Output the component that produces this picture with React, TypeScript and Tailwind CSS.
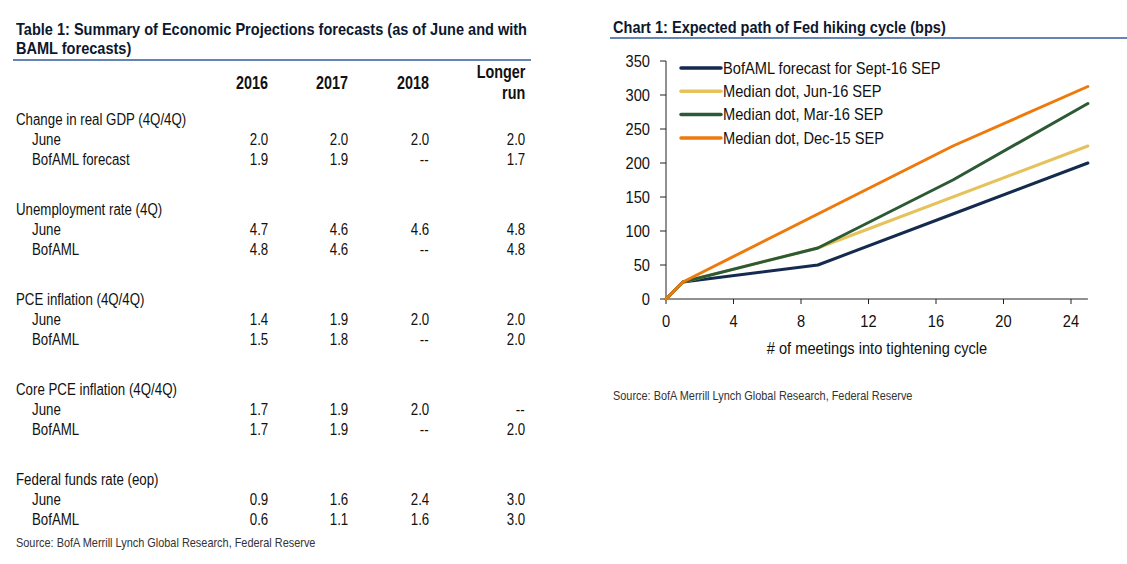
const arial = { fontFamily: '"Liberation Sans", Arial, sans-serif' };

type Row = { label: string; values: string[] };
type Group = { title: string; rows: Row[] };

const groups: Group[] = [
  { title: "Change in real GDP (4Q/4Q)", rows: [
    { label: "June", values: ["2.0", "2.0", "2.0", "2.0"] },
    { label: "BofAML forecast", values: ["1.9", "1.9", "--", "1.7"] },
  ] },
  { title: "Unemployment rate (4Q)", rows: [
    { label: "June", values: ["4.7", "4.6", "4.6", "4.8"] },
    { label: "BofAML", values: ["4.8", "4.6", "--", "4.8"] },
  ] },
  { title: "PCE inflation (4Q/4Q)", rows: [
    { label: "June", values: ["1.4", "1.9", "2.0", "2.0"] },
    { label: "BofAML", values: ["1.5", "1.8", "--", "2.0"] },
  ] },
  { title: "Core PCE inflation (4Q/4Q)", rows: [
    { label: "June", values: ["1.7", "1.9", "2.0", "--"] },
    { label: "BofAML", values: ["1.7", "1.9", "--", "2.0"] },
  ] },
  { title: "Federal funds rate (eop)", rows: [
    { label: "June", values: ["0.9", "1.6", "2.4", "3.0"] },
    { label: "BofAML", values: ["0.6", "1.1", "1.6", "3.0"] },
  ] },
];

// chart scale (svg origin at page x=610, y=40)
const X = (m: number) => 56 + m * 16.875;
const Y = (b: number) => 260 - b * 0.68;

const series = [
  { name: "BofAML forecast for Sept-16 SEP", color: "#142a4f", pts: [[0, 0], [1, 25], [9, 50], [17, 125], [25, 200]] },
  { name: "Median dot, Jun-16 SEP", color: "#e6c25c", pts: [[0, 0], [1, 25], [9, 75], [25, 225]] },
  { name: "Median dot, Mar-16 SEP", color: "#2b5a34", pts: [[0, 0], [1, 25], [9, 75], [17, 175], [25, 287.5]] },
  { name: "Median dot, Dec-15 SEP", color: "#ee7a0c", pts: [[0, 0], [1, 25], [17, 225], [25, 312.5]] },
];

// svg label, slightly condensed
function Label({ x, y, anchor = "start", children }: { x: number; y: number; anchor?: "start" | "middle" | "end"; children: React.ReactNode }) {
  return (
    <text transform={`translate(${x} ${y}) scale(0.915 1)`} textAnchor={anchor} fontSize="16" fill="#111">
      {children}
    </text>
  );
}

function Chart() {
  const yTicks = [0, 50, 100, 150, 200, 250, 300, 350];
  const xTicks = [0, 4, 8, 12, 16, 20, 24];
  return (
    <svg width="517" height="330" className="block" style={arial}>
      <line x1={X(0)} y1={Y(350)} x2={X(0)} y2={Y(0)} stroke="#222" strokeWidth="1" />
      <line x1={X(0)} y1={Y(0)} x2={X(25)} y2={Y(0)} stroke="#222" strokeWidth="1" />
      {yTicks.map((t) => (
        <g key={t}>
          <line x1={X(0) - 6} y1={Y(t)} x2={X(0)} y2={Y(t)} stroke="#222" />
          <Label x={40} y={Y(t) + 5.7} anchor="end">{t}</Label>
        </g>
      ))}
      {xTicks.map((t) => (
        <g key={t}>
          <line x1={X(t)} y1={Y(0)} x2={X(t)} y2={Y(0) + 5} stroke="#222" />
          <Label x={X(t)} y={287.5} anchor="middle">{t}</Label>
        </g>
      ))}
      <Label x={267} y={315} anchor="middle"># of meetings into tightening cycle</Label>

      {series.map((s) => (
        <polyline key={s.name} points={s.pts.map(([m, b]) => `${X(m)},${Y(b)}`).join(" ")} fill="none" stroke={s.color} strokeWidth="3" strokeLinejoin="round" strokeLinecap="round" />
      ))}

      {series.map((s, i) => (
        <g key={s.name}>
          <line x1={71} y1={29 + i * 23.3} x2={111} y2={29 + i * 23.3} stroke={s.color} strokeWidth="3.5" strokeLinecap="round" />
          <Label x={113} y={34.7 + i * 23.3}>{s.name}</Label>
        </g>
      ))}
    </svg>
  );
}

function Num({ v }: { v: string }) {
  return (
    <div className="text-right whitespace-nowrap">
      <span className="inline-block origin-right scale-x-[0.83]">{v}</span>
    </div>
  );
}

export default function App() {
  return (
    <div className="w-[1127px] h-[564px] bg-white flex text-[#111] overflow-hidden" style={arial}>
      {/* left table */}
      <div className="ml-[13px] w-[518px] flex flex-col">
        <div className="pt-[20px] pl-[3px] pb-[1px] border-b-2 border-[#6683b6] text-[17px] leading-[19px] font-bold text-[#0c1830] whitespace-nowrap">
          <span className="inline-block origin-left scale-x-[0.855]">Table 1: Summary of Economic Projections forecasts (as of June and with</span>
          <br />
          <span className="inline-block origin-left scale-x-[0.855]">BAML forecasts)</span>
        </div>
        <div className="pl-[3px] text-[16px] leading-[20px]">
          <div className="grid grid-cols-[192px_60px_80px_81px_96px] pt-[1px] font-bold text-[17.5px] leading-[21px]">
            <div />
            {["2016", "2017", "2018"].map((y) => (
              <div key={y} className="text-right self-center">
                <span className="inline-block origin-right scale-x-[0.82]">{y}</span>
              </div>
            ))}
            <div className="text-right">
              <span className="inline-block origin-right scale-x-[0.82]">Longer</span>
              <br />
              <span className="inline-block origin-right scale-x-[0.82]">run</span>
            </div>
          </div>
          {groups.map((g, gi) => (
            <div key={g.title} className={gi === 0 ? "mt-[6px]" : "mt-[30px]"}>
              <div className="whitespace-nowrap">
                <span className="inline-block origin-left scale-x-[0.83]">{g.title}</span>
              </div>
              {g.rows.map((r) => (
                <div key={r.label} className="grid grid-cols-[192px_60px_80px_81px_96px]">
                  <div className="pl-[16px] whitespace-nowrap">
                    <span className="inline-block origin-left scale-x-[0.83]">{r.label}</span>
                  </div>
                  {r.values.map((v, i) => (
                    <Num key={i} v={v} />
                  ))}
                </div>
              ))}
            </div>
          ))}
          <div className="mt-[3px] text-[13px] leading-[20px] text-[#333] whitespace-nowrap">
            <span className="inline-block origin-left scale-x-[0.84]">Source: BofA Merrill Lynch Global Research, Federal Reserve</span>
          </div>
        </div>
      </div>

      {/* right chart */}
      <div className="ml-[79px] flex-1 flex flex-col">
        <div className="pt-[18px] pl-[3px] pb-[0px] border-b-2 border-[#6683b6] text-[17px] leading-[19px] font-bold text-[#0c1830] whitespace-nowrap">
          <span className="inline-block origin-left scale-x-[0.855]">Chart 1: Expected path of Fed hiking cycle (bps)</span>
        </div>
        <Chart />
        <div className="pl-[3px] mt-[19px] text-[13px] leading-[16px] text-[#333] whitespace-nowrap">
          <span className="inline-block origin-left scale-x-[0.84]">Source: BofA Merrill Lynch Global Research, Federal Reserve</span>
        </div>
      </div>
    </div>
  );
}
